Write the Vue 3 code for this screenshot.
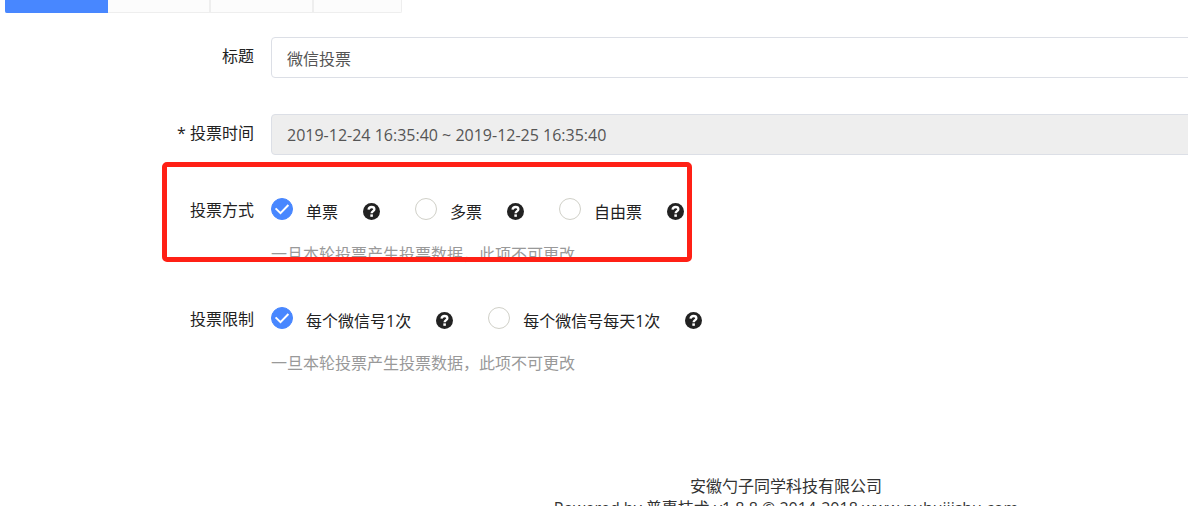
<script setup>
import { ref } from 'vue'

const tabs = ['选项一', '选项二', '选项三', '选项四']
const activeTab = ref(0)
const title = ref('微信投票')
const period = ref('2019-12-24 16:35:40 ~ 2019-12-25 16:35:40')
const hint = '一旦本轮投票产生投票数据，此项不可更改'

const groups = ref([
  {
    name: 'mode',
    label: '投票方式',
    value: '单票',
    options: ['单票', '多票', '自由票'],
    marked: true
  },
  {
    name: 'limit',
    label: '投票限制',
    value: '每个微信号1次',
    options: ['每个微信号1次', '每个微信号每天1次'],
    marked: false
  }
])
</script>

<template>
  <div class="page">
    <nav class="tabs">
      <button
        v-for="(tab, i) in tabs"
        :key="tab"
        type="button"
        class="tab"
        :class="{ active: activeTab === i }"
        :aria-label="tab"
        @click="activeTab = i"
      ></button>
    </nav>

    <form class="form" @submit.prevent>
      <div class="row">
        <label class="name" for="title">标题</label>
        <input id="title" v-model="title" class="field" type="text" />
      </div>
      <div class="row">
        <label class="name" for="period">* 投票时间</label>
        <input id="period" v-model="period" class="field" type="text" disabled />
      </div>

      <div
        v-for="group in groups"
        :key="group.name"
        class="row choice"
        role="radiogroup"
        :aria-labelledby="group.name"
      >
        <span :id="group.name" class="name">{{ group.label }}</span>
        <div class="content">
          <div class="options">
            <div v-for="option in group.options" :key="option" class="option">
              <label class="pick">
                <span class="dot">
                  <input v-model="group.value" type="radio" :name="group.name" :value="option" />
                  <svg viewBox="0 0 22 22" aria-hidden="true">
                    <path d="M4.6 10.4 L9.5 15.2 L17.4 7" />
                  </svg>
                </span>
                <span class="text">{{ option }}</span>
              </label>
              <svg class="help" viewBox="0 0 16 16" aria-hidden="true">
                <circle cx="8" cy="8" r="8" />
                <path d="M5.2 6.2 C5.5 4.4 6.6 3.8 8 3.8 C9.6 3.8 10.7 4.6 10.7 5.9 C10.7 7.6 8.1 7.8 8.1 9.7" />
                <rect x="6.9" y="10.7" width="2.4" height="2.3" />
              </svg>
            </div>
          </div>
          <p class="hint">{{ hint }}</p>
        </div>
        <div v-if="group.marked" class="mark"></div>
      </div>
    </form>

    <footer class="footer">
      <div>安徽勺子同学科技有限公司</div>
      <div>Powered by 普惠技术 v1.8.8 © 2014-2018 www.puhuijishu.com</div>
    </footer>
  </div>
</template>

<style>
body {
  background: #fff;
}
</style>

<style scoped>
.page {
  height: 100vh;
  overflow: hidden;
  font-family: "Open Sans", "Noto Sans CJK SC", sans-serif;
  font-size: 16px;
  line-height: 22px;
  color: #222;
}
.tabs {
  display: flex;
  height: 13px;
  padding-left: 5px;
}
.tab {
  box-sizing: border-box;
  width: 103px;
  padding: 0;
  border: solid #eee;
  border-width: 0 2px 1px 0;
  background: #fcfcfc;
}
.tab:last-child {
  width: 88px;
  border-right-width: 1px;
  border-bottom-right-radius: 2px;
}
.tab.active {
  border-color: #4887ff;
  border-bottom-left-radius: 2px;
  background: #4887ff;
}
.form {
  margin-right: -8px;
  padding-top: 24px;
}
.row {
  display: flex;
  position: relative;
  margin-bottom: 36px;
}
.name {
  flex: none;
  box-sizing: border-box;
  width: 271px;
  padding: 8px 17px 0 0;
  text-align: right;
}
.field {
  flex: 1;
  box-sizing: border-box;
  min-width: 0;
  height: 41px;
  padding: 0 15px;
  border: 1px solid #dcdfe6;
  border-radius: 4px;
  background: #fff;
  font: inherit;
  color: #555;
}
.field:disabled {
  background: #eee;
}
.choice {
  margin-bottom: 35px;
}
.content {
  padding-top: 7px;
}
.options {
  display: flex;
  gap: 35px;
}
.option,
.pick {
  display: flex;
}
.option {
  gap: 25px;
}
.pick {
  gap: 13px;
}
.dot {
  display: grid;
  width: 22px;
  height: 22px;
}
.dot > * {
  grid-area: 1 / 1;
}
.dot input {
  appearance: none;
  width: 22px;
  height: 22px;
  margin: 0;
  border: 1px solid #d0d0c8;
  border-radius: 50%;
  background: #fff;
}
.dot input:checked {
  border-color: #4887ff;
  background: #4887ff;
}
.dot svg {
  position: relative;
  width: 22px;
  height: 22px;
  visibility: hidden;
  pointer-events: none;
}
.dot input:checked + svg {
  visibility: visible;
}
.dot path {
  fill: none;
  stroke: #fff;
  stroke-width: 2;
}
.text {
  padding-top: 3px;
}
.help {
  width: 17px;
  height: 17px;
  margin-top: 5px;
}
.help circle {
  fill: #222;
}
.help path {
  fill: none;
  stroke: #fff;
  stroke-width: 2.2;
}
.help rect {
  fill: #fff;
}
.hint {
  margin: 20px 0 0;
  color: #999;
}
.mark {
  position: absolute;
  top: -29px;
  left: 162px;
  box-sizing: border-box;
  width: 530px;
  height: 100px;
  border: 5px solid #ff2015;
  border-radius: 5px;
  pointer-events: none;
}
.footer {
  padding: 66px 0 0 384px;
  text-align: center;
  white-space: nowrap;
  color: #333;
}
</style>
